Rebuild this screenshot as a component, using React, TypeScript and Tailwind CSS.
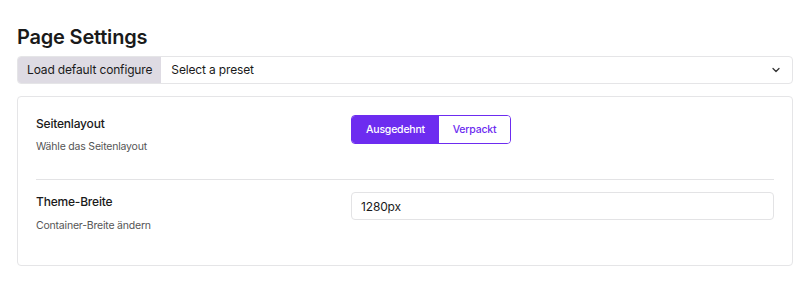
import React, { useState } from 'react';

export default function App() {
  const [layout, setLayout] = useState<'wide' | 'boxed'>('wide');

  return (
    <div className="min-h-screen bg-white pl-[17px] pr-[7px] pt-[24px] font-['Inter',sans-serif] text-[#1a1a1a]">
      <h1 className="text-[20px] font-semibold leading-[26px] tracking-[-0.2px] mb-[6px]">Page Settings</h1>

      {/* Preset selector */}
      <div className="flex h-[28px] rounded-[4px] border border-[#e5e5e7] overflow-hidden">
        <div className="flex items-center bg-[#dedbe3] px-[9px] text-[12px] tracking-[-0.15px] whitespace-nowrap">
          Load default configure
        </div>
        <div className="flex flex-1 items-center justify-between pl-[10px] pr-[10px] text-[12px] tracking-[-0.15px]">
          <span>Select a preset</span>
          <svg width="12" height="12" viewBox="0 0 24 24" fill="none" stroke="#333" strokeWidth="2.5" strokeLinecap="round" strokeLinejoin="round">
            <path d="m6 9 6 6 6-6" />
          </svg>
        </div>
      </div>

      {/* Settings card */}
      <div className="mt-[12px] h-[170px] rounded-[4px] border border-[#e5e5e7] px-[18px] pt-[18px]">
        <div className="grid grid-cols-[315px_1fr] h-[64px]">
          <div>
            <div className="text-[12px] font-medium leading-[18px] tracking-[-0.2px]">Seitenlayout</div>
            <div className="text-[10.5px] text-[#555] leading-[14px] mt-[7px] tracking-[-0.2px]">Wähle das Seitenlayout</div>
          </div>
          <div>
            <div className="inline-flex h-[29px] rounded-[4px] border border-[#6d2cf0] overflow-hidden text-[10.5px] font-medium tracking-[-0.2px]">
              <button
                onClick={() => setLayout('wide')}
                className={layout === 'wide' ? 'w-[87px] bg-[#6d2cf0] text-white' : 'w-[87px] bg-white text-[#6d2cf0]'}
              >
                Ausgedehnt
              </button>
              <button
                onClick={() => setLayout('boxed')}
                className={layout === 'boxed' ? 'w-[71px] bg-[#6d2cf0] text-white' : 'w-[71px] bg-white text-[#6d2cf0]'}
              >
                Verpackt
              </button>
            </div>
          </div>
        </div>

        <div className="border-t border-[#e3e3e5]" />

        <div className="grid grid-cols-[315px_1fr] pt-[12px]">
          <div>
            <div className="text-[12px] font-medium leading-[18px] pt-[1px] tracking-[-0.2px]">Theme-Breite</div>
            <div className="text-[10.5px] text-[#555] leading-[14px] mt-[8px] tracking-[-0.2px]">Container-Breite ändern</div>
          </div>
          <div>
            <input
              defaultValue="1280px"
              className="w-full h-[28px] rounded-[4px] border border-[#e3e3e5] px-[9px] text-[12px] tracking-[-0.15px] text-[#1a1a1a] outline-none"
            />
          </div>
        </div>
      </div>
    </div>
  );
}
